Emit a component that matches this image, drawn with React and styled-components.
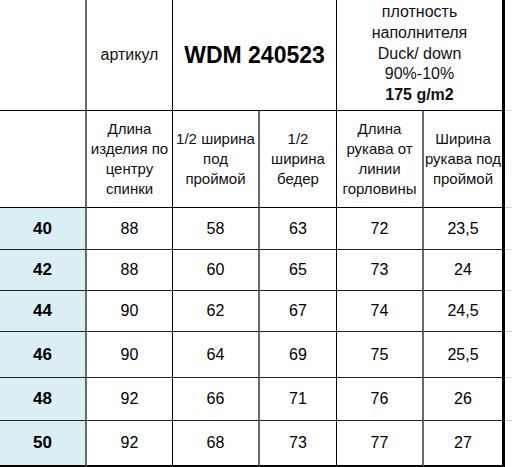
import React from 'react';
import styled, { createGlobalStyle } from 'styled-components';

const GlobalStyle = createGlobalStyle`
  html, body {
    margin: 0;
    padding: 0;
    background: #ffffff;
  }
  body {
    font-family: "Liberation Sans", Arial, sans-serif;
    color: #000;
  }
`;

const GRAY = '#6a6a6a';
const BLACK = '#000';

const Sheet = styled.div`
  display: grid;
  grid-template-columns: 87px 86px 87px 77px 87px 81px 7px;
  grid-template-rows: 111px 97px 42px 41px 41px 46px 43px 46px;
  width: 512px;
  height: 467px;
  overflow: hidden;
`;

const Cell = styled.div`
  box-sizing: border-box;
  display: flex;
  align-items: center;
  justify-content: center;
  text-align: center;
  grid-column: ${p => p.span ? `span ${p.span}` : 'auto'};
  border-right: ${p => p.right || '0'};
  border-bottom: ${p => p.bottom || `1px solid ${BLACK}`};
  background: ${p => p.blue ? '#dbeef4' : '#fff'};
`;

const HeadText = styled.div`
  font-size: ${p => p.big ? '16px' : '15px'};
  line-height: 20px;
  color: #111;
`;

const Model = styled.div`
  font-size: 23px;
  font-weight: bold;
`;

const Density = styled.div`
  font-size: 16px;
  line-height: 20.7px;
  color: #111;
  padding-bottom: 2px;
  b {
    font-weight: bold;
  }
`;

const Size = styled.span`
  font-size: 17px;
  font-weight: bold;
`;

const Num = styled.span`
  font-size: 16px;
`;

const Spare = styled.div`
  box-sizing: border-box;
  border-bottom: ${p => p.line ? '1px solid #d6d6d6' : '0'};
  background: #fff;
`;

const colBorders = [
  `2px solid ${GRAY}`,
  `1px solid ${BLACK}`,
  `2px solid ${GRAY}`,
  `1px solid ${BLACK}`,
  `2px solid ${GRAY}`,
  `3px solid ${BLACK}`,
];

const headers = [
  ['Длина', 'изделия по', 'центру', 'спинки'],
  ['1/2 ширина', 'под', 'проймой'],
  ['1/2', 'ширина', 'бедер'],
  ['Длина', 'рукава от', 'линии', 'горловины'],
  ['Ширина', 'рукава под', 'проймой'],
];

const rows = [
  ['40', '88', '58', '63', '72', '23,5'],
  ['42', '88', '60', '65', '73', '24'],
  ['44', '90', '62', '67', '74', '24,5'],
  ['46', '90', '64', '69', '75', '25,5'],
  ['48', '92', '66', '71', '76', '26'],
  ['50', '92', '68', '73', '77', '27'],
];

const Lines = ({ items }) => (
  <HeadText>
    {items.map((t, i) => (
      <React.Fragment key={i}>
        {t}
        {i < items.length - 1 && <br />}
      </React.Fragment>
    ))}
  </HeadText>
);

export default function App() {
  return (
    <>
      <GlobalStyle />
      <Sheet>
        <Cell right={colBorders[0]} />
        <Cell right={colBorders[1]}>
          <HeadText big>артикул</HeadText>
        </Cell>
        <Cell span={2} right={colBorders[3]}>
          <Model>WDM 240523</Model>
        </Cell>
        <Cell span={2} right={colBorders[5]}>
          <Density>
            плотность<br />
            наполнителя<br />
            Duck/ down<br />
            90%-10%<br />
            <b>175 g/m2</b>
          </Density>
        </Cell>
        <Spare line />

        <Cell right={colBorders[0]} />
        {headers.map((h, i) => (
          <Cell key={i} right={colBorders[i + 1]}>
            <Lines items={h} />
          </Cell>
        ))}
        <Spare line />

        {rows.map((r, ri) => {
          const last = ri === rows.length - 1;
          const bottom = last ? `2px solid ${BLACK}` : `1px solid #222`;
          return (
            <React.Fragment key={r[0]}>
              <Cell blue right={colBorders[0]} bottom={bottom}>
                <Size>{r[0]}</Size>
              </Cell>
              {r.slice(1).map((v, ci) => (
                <Cell key={ci} right={colBorders[ci + 1]} bottom={bottom}>
                  <Num>{v}</Num>
                </Cell>
              ))}
              <Spare line={!last} />
            </React.Fragment>
          );
        })}
      </Sheet>
    </>
  );
}
